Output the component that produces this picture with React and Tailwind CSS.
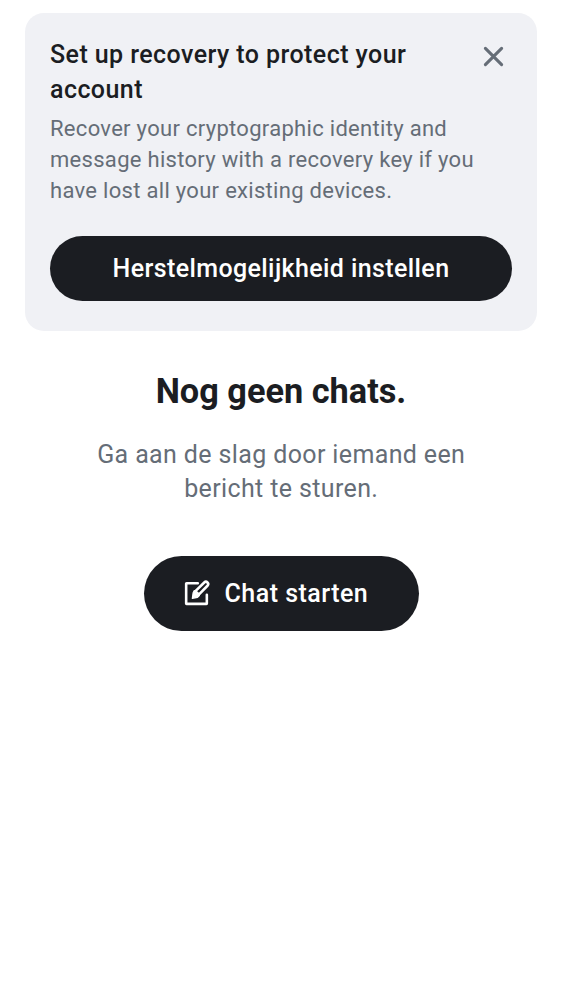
export default function App() {
  return (
    <main className="flex min-h-[1000px] w-[562px] flex-col items-center bg-white pt-[12.5px] font-['Roboto',sans-serif] text-[#1b1d22]">
      <section className="flex h-[318.5px] w-[512px] flex-col rounded-[19px] bg-[#f0f1f5] px-[25px] pt-[25px]">
        <div className="flex items-start justify-between">
          <h2 className="pt-[0.5px] text-[25px] leading-[34.5px] font-medium tracking-[0.43px] whitespace-nowrap">
            Set up recovery to protect your
            <br />
            account
          </h2>
          <button aria-label="Close" className="mt-[3px] mr-[3px]">
            <svg className="size-[31px]" viewBox="0 0 31 31" fill="none" stroke="#656d77" strokeWidth="3.1" strokeLinecap="round">
              <path d="M7.4 7.4 23.6 23.6M23.6 7.4 7.4 23.6" />
            </svg>
          </button>
        </div>
        <p className="mt-[6px] text-[22px] leading-[31px] tracking-[0.3px] whitespace-nowrap text-[#656d77]">
          Recover your cryptographic identity and
          <br />
          message history with a recovery key if you
          <br />
          have lost all your existing devices.
        </p>
        <button className="mt-[29.5px] h-[65.5px] w-full shrink-0 rounded-full bg-[#1b1d22] text-[25px] font-medium tracking-[0.4px] text-white">
          Herstelmogelijkheid instellen
        </button>
      </section>
      <h1 className="mt-[38px] text-[34.3px] leading-[44px] font-bold">Nog geen chats.</h1>
      <p className="mt-[25px] pl-[0.5px] text-center text-[25px] leading-[34px] tracking-[0.37px] text-[#656d77]">
        Ga aan de slag door iemand een
        <br />
        bericht te sturen.
      </p>
      <button className="mt-[50px] flex h-[75px] w-[275px] items-center gap-[12.5px] rounded-full bg-[#1b1d22] pl-[37.5px] text-[25px] font-medium tracking-[0.48px] text-white">
        <svg className="size-[31px]" viewBox="0 0 24 24" fill="none" stroke="currentColor" strokeWidth="2" strokeLinecap="round" strokeLinejoin="round">
          <path d="M13 4H4.3Q4 4 4 4.3V19.7Q4 20 4.3 20H19.7Q20 20 20 19.7V13" />
          <path d="M18 3.5a1.75 1.75 0 0 1 2.5 2.5L13.8 12.8 11 10.3Z" />
          <path d="M10.3 9.8 14.2 13.5 12.8 14.9 8.8 15.7 9.4 11.4Z" fill="currentColor" strokeWidth="1" />
        </svg>
        Chat starten
      </button>
    </main>
  );
}
